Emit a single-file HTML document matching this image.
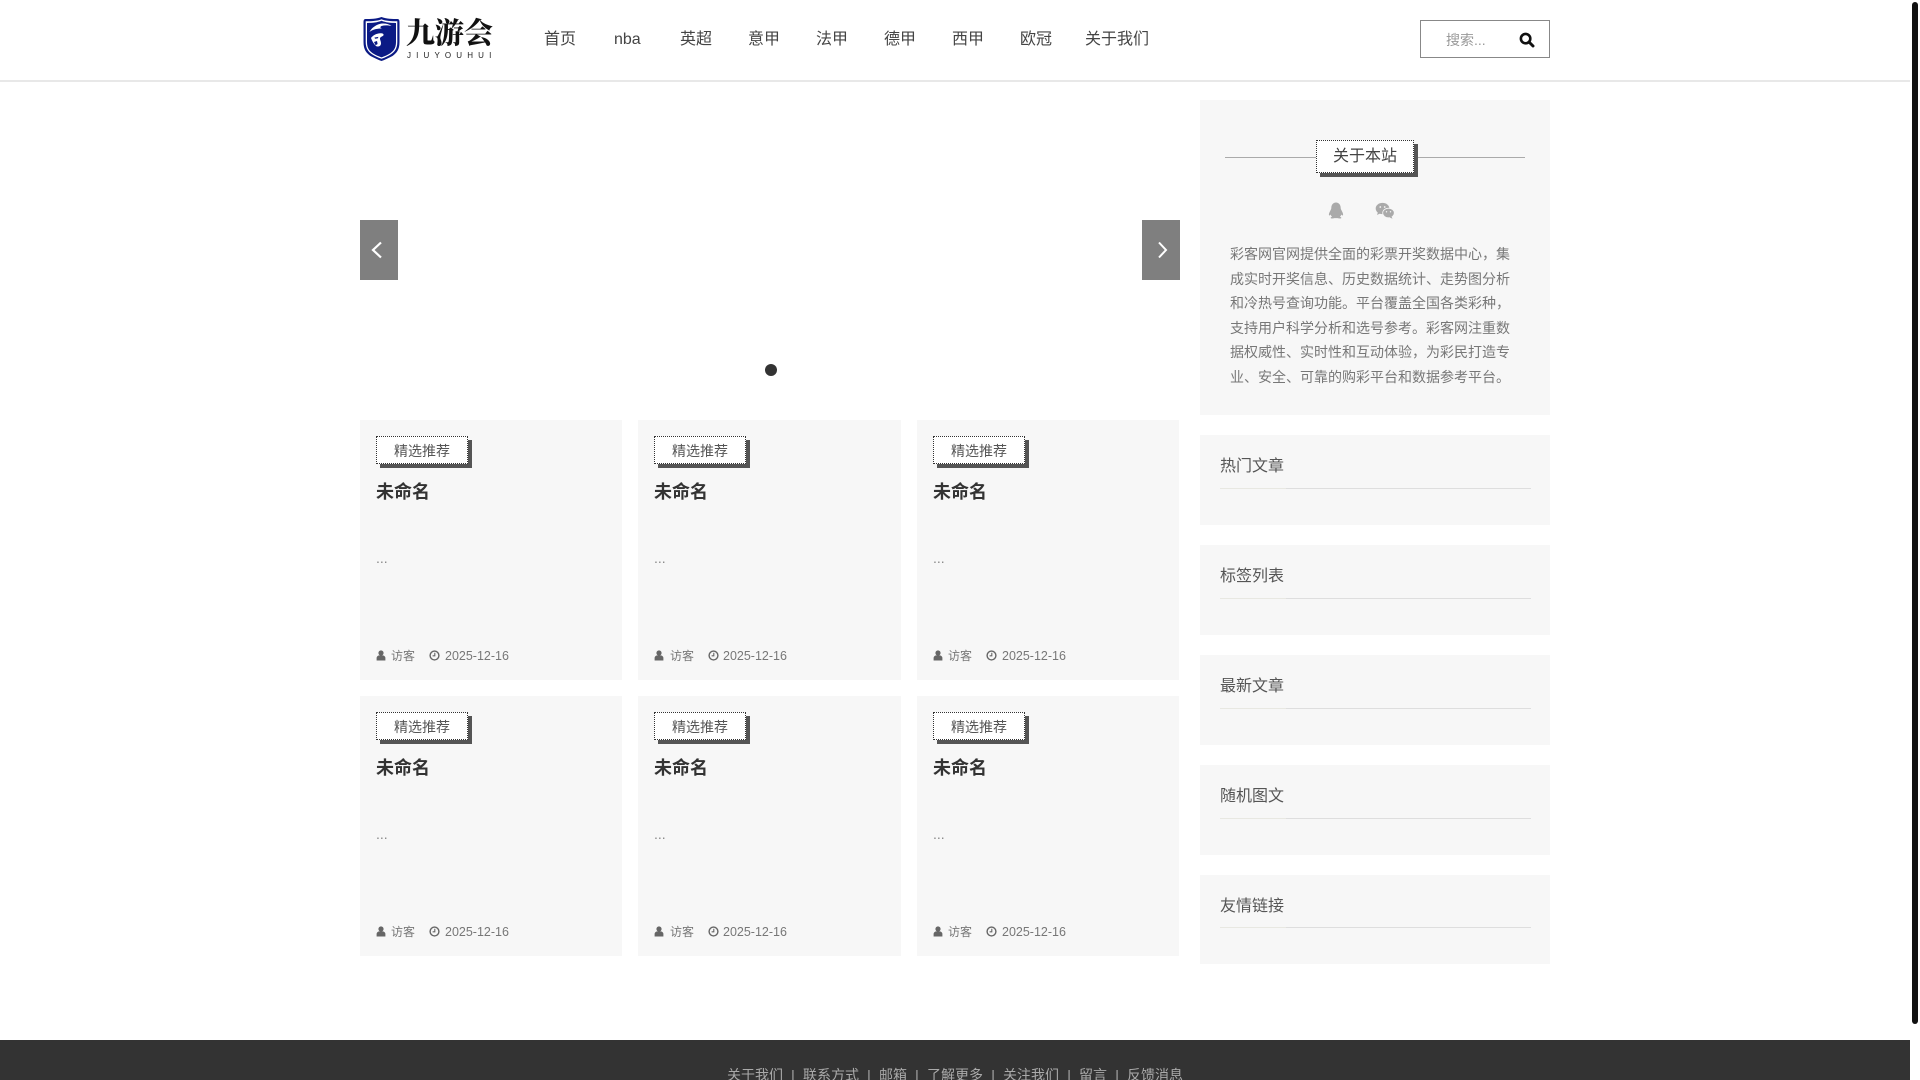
<!DOCTYPE html>
<html lang="zh-CN">
<head>
<meta charset="utf-8">
<title>九游会</title>
<style>
*{box-sizing:border-box;margin:0;padding:0}
html,body{width:1920px;height:1080px;overflow:hidden;background:#fff}
body{position:relative;font-family:"Liberation Sans","WenQuanYi Zen Hei","Noto Sans CJK SC",sans-serif;color:#555}
.a{position:absolute;white-space:nowrap}
.nav{position:absolute;top:30px;font-size:16px;line-height:20px;color:#444;white-space:nowrap}
.card{position:absolute;width:262px;height:260px;background:#f7f7f7}
.tag{position:absolute;left:16px;top:16px;width:92px;height:28px;background:#fff;border:1px dotted #333;box-shadow:4px 4px 0 #555;font-size:14px;line-height:28px;text-align:center;color:#555}
.ct{position:absolute;left:16px;top:60px;font-size:18px;line-height:24px;font-weight:bold;color:#333}
.dots{position:absolute;left:16px;top:128px;font-size:14px;line-height:20px;color:#888}
.meta{position:absolute;left:16px;top:227px;font-size:12.5px;line-height:18px;color:#777;white-space:nowrap}
.meta svg{position:absolute;top:3px}
.meta span{position:absolute;top:0}
.meta .u{font-size:12px}
.panel{position:absolute;left:1200px;width:350px;background:#f7f7f7}
.pt{position:absolute;left:20px;top:21px;font-size:16px;line-height:22px;color:#555}
.pl{position:absolute;left:20px;top:53px;width:311px;height:1px;background:#dedede}
.pl:before{content:"";position:absolute;left:0;top:0;width:66px;height:1px;background:#e8e8e2}
.about{position:absolute;left:30px;top:142px;width:290px;font-size:14px;line-height:24.6px;color:#777}
.foot{position:absolute;left:0;top:1040px;width:1910px;height:40px;background:#333}
.fl{position:absolute;left:0;top:25px;width:100%;text-align:center;font-size:14px;line-height:20px;color:#aaa;white-space:nowrap}
.fl i{font-style:normal;margin:0 8.2px}
</style>
</head>
<body>

<!-- header -->
<div class="a" style="left:0;top:80px;width:1910px;height:2px;background:#e8e8e8"></div>

<svg class="a" style="left:362px;top:16px" width="39" height="46" viewBox="0 0 38 46">
<path d="M19 1C14 3 8 3 3 3 1 3 1 5 1 7v19c0 8 3 11 7 14 4 2 8 4 11 5 3-1 7-3 11-5 4-3 7-6 7-14V7c0-2 0-4-2-4-5 0-11 0-16-2z" fill="#0b1a85"/>
<path d="M19 3.200C15 5 9 5.200 3.200 5.200V26c0 7 3 10 6.300 12.200 3 2 6 3.200 9.500 4.600 3.500-1.400 6.500-2.600 9.500-4.600 3.300-2.200 6.300-5.200 6.300-12.200V5.200C29 5.200 23 5 19 3.200z" fill="#fff"/>
<path d="M19 4.800C15 6.500 10 7 4.500 7V26c0 6.500 2.800 9.200 5.700 11.200 2.800 1.800 5.800 3 8.800 4.200 3-1.200 6-2.400 8.800-4.200 2.900-2 5.700-4.700 5.700-11.200V7C28 7 23 6.500 19 4.800z" fill="#0b1a85"/>
<path d="M7 16c2-4 7-8 12.500-8.500 3.500-.3 7 .5 9.500 2.500-4-.8-7-.8-10 0-2 1.200-1 2 .5 2.500-4 0-9 .5-12.500 3.500z" fill="#fff"/>
<path d="M8.500 22c2-2.500 5-4.500 9.500-4.700 2-.1 3.500.7 3 2-1 1.500-3 1.200-3.500 3-.2 1.500 1.200 3 1 5.500-.2 1.700-1.300 2.700-2.800 2.700-1 0-2-.2-2.500-.8-2-2-3.700-4.700-4.700-7.700z" fill="#fff"/>
<path d="M12 21.500l4-.6-.8 1.500-2.700.4zM11.500 26l3-1 .6 3-2 1.200z" fill="#0b1a85"/>
</svg>
<div class="a" style="left:406px;top:13px;font-family:'Noto Serif CJK SC',serif;font-weight:900;font-size:29px;line-height:38px;color:#111">九游会</div>
<div class="a" style="left:407px;top:51px;font-size:8px;line-height:10px;letter-spacing:5.15px;color:#222">JIUYOUHUI</div>

<div class="nav" style="left:544px">首页</div>
<div class="nav" style="left:614px">nba</div>
<div class="nav" style="left:680px">英超</div>
<div class="nav" style="left:748px">意甲</div>
<div class="nav" style="left:816px">法甲</div>
<div class="nav" style="left:884px">德甲</div>
<div class="nav" style="left:952px">西甲</div>
<div class="nav" style="left:1020px">欧冠</div>
<div class="nav" style="left:1085px">关于我们</div>

<div class="a" style="left:1420px;top:20px;width:130px;height:38px;border:1px solid #888;background:#fff"></div>
<div class="a" style="left:1446px;top:30px;font-size:14px;line-height:20px;color:#999">搜索...</div>
<svg class="a" style="left:1519px;top:32px" width="16" height="16" viewBox="0 0 16 16"><circle cx="6.6" cy="6.6" r="4.7" fill="none" stroke="#111" stroke-width="2.6"/><path d="M10 10l4 4" stroke="#111" stroke-width="3" stroke-linecap="round"/></svg>

<!-- carousel -->
<div class="a" style="left:360px;top:220px;width:38px;height:60px;background:#7f7f7f"></div>
<svg class="a" style="left:360px;top:220px" width="38" height="60" viewBox="0 0 38 60"><path d="M21 22.500L13 30l8 7.500" fill="none" stroke="#fff" stroke-width="2.200"/></svg>
<div class="a" style="left:1142px;top:220px;width:38px;height:60px;background:#7f7f7f"></div>
<svg class="a" style="left:1142px;top:220px" width="38" height="60" viewBox="0 0 38 60"><path d="M17 22.500l7 7.500-7 7.500" fill="none" stroke="#fff" stroke-width="2"/></svg>
<div class="a" style="left:765px;top:364px;width:12px;height:12px;border-radius:50%;background:#333"></div>

<!-- cards -->
<div class="card" style="left:360px;top:420px"><div class="tag">精选推荐</div><div class="ct">未命名</div><div class="dots">...</div>
<div class="meta"><svg style="left:0" width="10" height="11" viewBox="0 0 10 11"><circle cx="5" cy="3" r="2.6" fill="#666"/><path d="M.6 10.5V8C.6 6.5 2 5.6 3 5.4h4C8 5.6 9.4 6.5 9.4 8v2.500z" fill="#666"/></svg><span class="u" style="left:15px">访客</span><svg style="left:53px" width="11" height="11" viewBox="0 0 11 11"><circle cx="5.500" cy="5.500" r="4.400" fill="none" stroke="#666" stroke-width="1.400"/><path d="M5.800 2.800v3H3.600" fill="none" stroke="#666" stroke-width="1.100"/></svg><span style="left:69px">2025-12-16</span></div></div>

<div class="card" style="left:638px;top:420px;width:263px"><div class="tag">精选推荐</div><div class="ct">未命名</div><div class="dots">...</div>
<div class="meta"><svg style="left:0" width="10" height="11" viewBox="0 0 10 11"><circle cx="5" cy="3" r="2.6" fill="#666"/><path d="M.6 10.5V8C.6 6.5 2 5.6 3 5.4h4C8 5.6 9.4 6.5 9.4 8v2.500z" fill="#666"/></svg><span class="u" style="left:16px">访客</span><svg style="left:54px" width="11" height="11" viewBox="0 0 11 11"><circle cx="5.500" cy="5.500" r="4.400" fill="none" stroke="#666" stroke-width="1.400"/><path d="M5.800 2.800v3H3.600" fill="none" stroke="#666" stroke-width="1.100"/></svg><span style="left:69px">2025-12-16</span></div></div>

<div class="card" style="left:917px;top:420px"><div class="tag">精选推荐</div><div class="ct">未命名</div><div class="dots">...</div>
<div class="meta"><svg style="left:0" width="10" height="11" viewBox="0 0 10 11"><circle cx="5" cy="3" r="2.6" fill="#666"/><path d="M.6 10.5V8C.6 6.5 2 5.6 3 5.4h4C8 5.6 9.4 6.5 9.4 8v2.500z" fill="#666"/></svg><span class="u" style="left:15px">访客</span><svg style="left:53px" width="11" height="11" viewBox="0 0 11 11"><circle cx="5.500" cy="5.500" r="4.400" fill="none" stroke="#666" stroke-width="1.400"/><path d="M5.800 2.800v3H3.600" fill="none" stroke="#666" stroke-width="1.100"/></svg><span style="left:69px">2025-12-16</span></div></div>

<div class="card" style="left:360px;top:696px"><div class="tag">精选推荐</div><div class="ct">未命名</div><div class="dots">...</div>
<div class="meta"><svg style="left:0" width="10" height="11" viewBox="0 0 10 11"><circle cx="5" cy="3" r="2.6" fill="#666"/><path d="M.6 10.5V8C.6 6.5 2 5.6 3 5.4h4C8 5.6 9.4 6.5 9.4 8v2.500z" fill="#666"/></svg><span class="u" style="left:15px">访客</span><svg style="left:53px" width="11" height="11" viewBox="0 0 11 11"><circle cx="5.500" cy="5.500" r="4.400" fill="none" stroke="#666" stroke-width="1.400"/><path d="M5.800 2.800v3H3.600" fill="none" stroke="#666" stroke-width="1.100"/></svg><span style="left:69px">2025-12-16</span></div></div>

<div class="card" style="left:638px;top:696px;width:263px"><div class="tag">精选推荐</div><div class="ct">未命名</div><div class="dots">...</div>
<div class="meta"><svg style="left:0" width="10" height="11" viewBox="0 0 10 11"><circle cx="5" cy="3" r="2.6" fill="#666"/><path d="M.6 10.5V8C.6 6.5 2 5.6 3 5.4h4C8 5.6 9.4 6.5 9.4 8v2.500z" fill="#666"/></svg><span class="u" style="left:16px">访客</span><svg style="left:54px" width="11" height="11" viewBox="0 0 11 11"><circle cx="5.500" cy="5.500" r="4.400" fill="none" stroke="#666" stroke-width="1.400"/><path d="M5.800 2.800v3H3.600" fill="none" stroke="#666" stroke-width="1.100"/></svg><span style="left:69px">2025-12-16</span></div></div>

<div class="card" style="left:917px;top:696px"><div class="tag">精选推荐</div><div class="ct">未命名</div><div class="dots">...</div>
<div class="meta"><svg style="left:0" width="10" height="11" viewBox="0 0 10 11"><circle cx="5" cy="3" r="2.6" fill="#666"/><path d="M.6 10.5V8C.6 6.5 2 5.6 3 5.4h4C8 5.6 9.4 6.5 9.4 8v2.500z" fill="#666"/></svg><span class="u" style="left:15px">访客</span><svg style="left:53px" width="11" height="11" viewBox="0 0 11 11"><circle cx="5.500" cy="5.500" r="4.400" fill="none" stroke="#666" stroke-width="1.400"/><path d="M5.800 2.800v3H3.600" fill="none" stroke="#666" stroke-width="1.100"/></svg><span style="left:69px">2025-12-16</span></div></div>

<!-- sidebar -->
<div class="panel" style="top:100px;height:315px">
  <div class="a" style="left:25px;top:57px;width:300px;height:1px;background:#aaa"></div>
  <div class="a" style="left:116px;top:40px;width:98px;height:33px;background:#fff;border:1px dotted #333;box-shadow:4px 4px 0 #555;font-size:16px;line-height:32px;text-align:center;color:#444">关于本站</div>
  <svg class="a" style="left:127px;top:102px" width="18" height="18" viewBox="0 0 18 18"><path d="M9 .5C6 .5 4.300 3 4.300 6c0 1-.5 1.700-1.200 3.100-.8 1.500-1.500 3.200-1.100 4.200.3.500 1.100 0 1.600-.8.300 1 1 1.800 1.500 2.200-1 .3-1.700.8-1.400 1.400.4.500 2.200.4 3.300.1.500-.1 3.500-.1 4 0 1.100.3 2.900.4 3.300-.1.300-.6-.4-1.100-1.400-1.400.5-.4 1.200-1.200 1.500-2.200.5.800 1.300 1.300 1.600.8.400-1-.3-2.700-1.100-4.200C14.200 7.700 13.700 7 13.700 6 13.700 3 12 .5 9 .5z" fill="#aaa"/></svg>
  <svg class="a" style="left:175px;top:102px" width="20" height="18" viewBox="0 0 20 18"><ellipse cx="7.500" cy="6.500" rx="6.800" ry="5.600" fill="#aaa"/><path d="M3 10l-1 3 3.500-1.800z" fill="#aaa"/><ellipse cx="13.500" cy="11" rx="5.800" ry="4.800" stroke="#f7f7f7" stroke-width=".8" fill="#aaa"/><path d="M16.500 14.500l1 2.300-3-1.400z" fill="#aaa"/><circle cx="5.300" cy="5" r=".9" fill="#f7f7f7"/><circle cx="9.700" cy="5" r=".9" fill="#f7f7f7"/><circle cx="11.500" cy="9.800" r=".7" fill="#f7f7f7"/><circle cx="15.500" cy="9.800" r=".7" fill="#f7f7f7"/></svg>
  <div class="about">彩客网官网提供全面的彩票开奖数据中心，集成实时开奖信息、历史数据统计、走势图分析和冷热号查询功能。平台覆盖全国各类彩种，支持用户科学分析和选号参考。彩客网注重数据权威性、实时性和互动体验，为彩民打造专业、安全、可靠的购彩平台和数据参考平台。</div>
</div>
<div class="panel" style="top:435px;height:90px"><div class="pt">热门文章</div><div class="pl"></div></div>
<div class="panel" style="top:545px;height:90px"><div class="pt">标签列表</div><div class="pl"></div></div>
<div class="panel" style="top:655px;height:90px"><div class="pt">最新文章</div><div class="pl"></div></div>
<div class="panel" style="top:765px;height:90px"><div class="pt">随机图文</div><div class="pl"></div></div>
<div class="panel" style="top:875px;height:89px"><div class="pt">友情链接</div><div class="pl" style="top:52px"></div></div>

<!-- footer -->
<div class="foot"><div class="fl">关于我们<i>|</i>联系方式<i>|</i>邮箱<i>|</i>了解更多<i>|</i>关注我们<i>|</i>留言<i>|</i>反馈消息</div></div>

<!-- scrollbar -->
<div class="a" style="left:1912px;top:2px;width:6px;height:1022px;background:#111;border-radius:3px"></div>
</body>
</html>
